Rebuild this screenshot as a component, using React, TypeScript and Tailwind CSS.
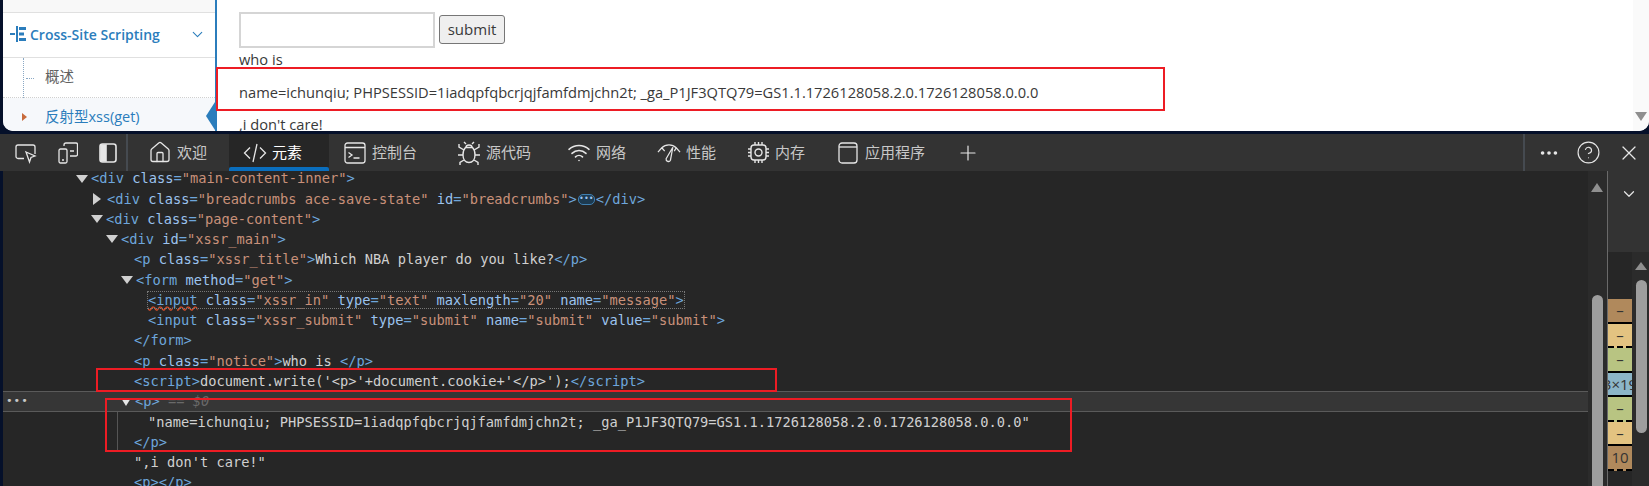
import React from 'react';
import { Home, Plus, X, ChevronDown, CircleHelp, Ellipsis, Wifi } from 'lucide-react';

const Tok = {
  t: (s: string) => <span className="text-[#6ea6dc]">{s}</span>,
  a: (s: string) => <span className="text-[#9cc3ee]">{s}</span>,
  v: (s: string) => <span className="text-[#c9917a]">{s}</span>,
};

const attr = (name: string, value: string) => (
  <>
    {' '}
    {Tok.a(name)}
    {Tok.t('=')}
    {Tok.v(`"${value}"`)}
  </>
);

const Row = ({ pad, tri, children }: { pad: string; tri?: 'down' | 'right'; children: React.ReactNode }) => (
  <div className={`flex h-[20.28px] shrink-0 items-center whitespace-pre ${pad}`}>
    {tri === 'down' && <span className="mr-[3px] h-0 w-0 border-x-[6px] border-t-[8px] border-x-transparent border-t-[#d0d0d0]" />}
    {tri === 'right' && <span className="mr-[6px] ml-[1px] h-0 w-0 border-y-[6px] border-l-[8px] border-y-transparent border-l-[#d0d0d0]" />}
    <span>{children}</span>
  </div>
);

function CodeIcon() {
  return (
    <svg width="24" height="22" viewBox="0 0 24 22" fill="none" stroke="currentColor" strokeWidth="1.3">
      <path d="M7 5.500 1.500 11 7 16.500M17 5.500 22.500 11 17 16.500M14 2 10 20" />
    </svg>
  );
}

function ConsoleIcon() {
  return (
    <svg width="22" height="22" viewBox="0 0 22 22" fill="none" stroke="currentColor" strokeWidth="1.3">
      <rect x="1" y="1" width="20" height="20" rx="2.500" />
      <path d="M1 5.500h20M4.500 10.500 8 13l-3.500 2.500M9.500 16h6" />
    </svg>
  );
}

function BugIcon() {
  return (
    <svg width="24" height="24" viewBox="0 0 24 24" fill="none" stroke="currentColor" strokeWidth="1.4">
      <path d="M8.500 6.500h7c2 2 2.500 4.500 2.500 7.500 0 4.500-2.500 7.500-6 7.500S6 18.500 6 14c0-3 .5-5.500 2.500-7.500Z" />
      <path d="M9 6.500C9 5 10 4 12 4s3 1 3 2.500M9 3 7 1M15 3l2-2M7 9 2 6V3M17 9l5-3V3M6 14H1M18 14h5M7 19l-4 2.500V24M17 19l4 2.500V24" />
    </svg>
  );
}

function GaugeIcon() {
  return (
    <svg width="25" height="22" viewBox="0 0 25 22" fill="none" stroke="currentColor" strokeWidth="1.3">
      <path d="M1 10 5 5.500C7 3.500 9.500 2.500 12.500 2.500S18 3.500 20 5.500L24 10M5 5.500 8 9M20 5.500 18 9" />
      <path d="M9.500 17 16.500 5 14 18.500a2.400 2.400 0 0 1-4.500-1.500Z" />
    </svg>
  );
}

function ChipIcon() {
  return (
    <svg width="23" height="23" viewBox="0 0 23 23" fill="none" stroke="currentColor" strokeWidth="1.4">
      <rect x="4" y="4" width="15" height="15" rx="3" />
      <circle cx="11.500" cy="11.500" r="3.500" />
      <path d="M8 1v3M11.500 1v3M15 1v3M8 19v3M11.500 19v3M15 19v3M1 8h3M1 11.500h3M1 15h3M19 8h3M19 11.500h3M19 15h3" />
    </svg>
  );
}

function AppIcon() {
  return (
    <svg width="20" height="22" viewBox="0 0 20 22" fill="none" stroke="currentColor" strokeWidth="1.3">
      <rect x="1" y="1" width="18" height="20" rx="3" />
      <path d="M1 5h18" />
    </svg>
  );
}

const tabs = [
  { label: '欢迎', icon: <Home size={25} strokeWidth={1.3} />, cls: 'ml-[20px] w-[81px]' },
  { label: '元素', icon: <CodeIcon />, cls: 'w-[100px] pl-[14px] bg-[#262626] text-white', active: true },
  { label: '控制台', icon: <ConsoleIcon />, cls: 'pl-[14px] w-[117px]' },
  { label: '源代码', icon: <BugIcon />, cls: 'pl-[11px] w-[121px]' },
  { label: '网络', icon: <Wifi size={25} strokeWidth={1.6} />, cls: 'w-[90px]' },
  { label: '性能', icon: <GaugeIcon />, cls: 'w-[89px]' },
  { label: '内存', icon: <ChipIcon />, cls: 'w-[90px]' },
  { label: '应用程序', icon: <AppIcon />, cls: 'w-[120px]' },
];

const boxRows = [
  { label: '–', cls: 'bg-[#b0895c] border-b-2 border-black' },
  { label: '–', cls: 'bg-[#e3c381] border-b-2 border-dashed border-black' },
  { label: '–', cls: 'bg-[#b8c482] border-b-2 border-black' },
  { label: '3×19', cls: 'bg-[#8cb6c8] border-b-2 border-black' },
  { label: '–', cls: 'bg-[#b8c482] border-b-2 border-dashed border-black' },
  { label: '–', cls: 'bg-[#e3c381] border-b-2 border-black' },
  { label: '10', cls: 'bg-[#b0895c] border-b-2 border-dashed border-black' },
];

export default function App() {
  return (
    <div className="flex h-[486px] w-[1649px] flex-col overflow-hidden bg-[#05102a] pl-[3px] font-['Open_Sans',sans-serif]">
      {/* page being inspected */}
      <div className="relative flex h-[131px] shrink-0 overflow-hidden rounded-b-[10px] bg-white text-[14.67px] text-[#393939]">
        <aside className="flex w-[214px] shrink-0 flex-col border-r-2 border-[#2b7dbc] text-[14px]">
          <div className="h-[13px] shrink-0 border-b border-[#e0e0e0] bg-[#f8f8f8]" />
          <div className="flex h-[45px] shrink-0 items-center border-b border-[#e0e0e0] pb-[2px] pl-[7px] text-[#2b7dbc]">
            <svg width="17" height="16" viewBox="0 0 17 16" fill="currentColor" className="shrink-0">
              <path d="M0 7h5v2H0zM6 0h2v16H6zM9 1h7v3H9zM9 6.500h5v3H9zM9 12h7v3H9z" />
            </svg>
            <span className="ml-[3px] font-semibold">Cross-Site Scripting</span>
            <ChevronDown size={17} strokeWidth={1.5} className="ml-[29px]" />
          </div>
          <div className="relative flex h-[40px] shrink-0 items-center border-b border-dotted border-[#d0d0d0] pb-[4px] pl-[42px] text-[14.5px] text-[#616161] font-['Noto_Sans_CJK_SC',sans-serif]">
            <span className="absolute top-0 left-[20px] h-[80px] border-l border-dotted border-[#8aa8c4]" />
            <span className="absolute top-[20px] left-[23px] w-[8px] border-t border-dotted border-[#8aa8c4]" />
            概述
          </div>
          <div className="relative flex flex-1 items-center bg-[#f6f8fb] pt-[4px] pl-[42px] text-[14.5px] text-[#2b7dbc] font-['Open_Sans','Noto_Sans_CJK_SC',sans-serif]">
            <span className="absolute top-[15px] left-[19px] h-0 w-0 border-y-[4px] border-l-[5px] border-y-transparent border-l-[#c86b3c]" />
            反射型xss(get)
            <span className="absolute top-[4px] right-0 h-0 w-0 border-y-[14px] border-r-[9px] border-y-transparent border-r-[#2b7dbc]" />
          </div>
        </aside>
        <main className="flex-1 pl-[22px]">
          <div className="flex h-[48px] items-start pt-[12px]">
            <div className="h-[36px] w-[196px] border-2 border-[#d5d5d5] bg-white" />
            <button className="mt-[3px] ml-[4px] h-[29px] w-[66px] rounded-[3px] border border-[#767676] bg-[#efefef] text-[15px] text-[#393939]">submit</button>
          </div>
          <p className="mt-[1px] leading-[20px]">who is</p>
          <p className="mt-[13px] leading-[20px]">name=ichunqiu; PHPSESSID=1iadqpfqbcrjqjfamfdmjchn2t; _ga_P1JF3QTQ79=GS1.1.1726128058.2.0.1726128058.0.0.0</p>
          <p className="mt-[12px] leading-[20px]">,i don't care!</p>
        </main>
        <div className="relative w-[16px] shrink-0 bg-[#fafafa]">
          <span className="absolute top-[112px] left-[2px] h-0 w-0 border-x-[6px] border-t-[9px] border-x-transparent border-t-[#8f8f8f]" />
        </div>
      </div>
      <div className="h-[3px] shrink-0" />

      {/* devtools toolbar */}
      <div className="-ml-[3px] flex h-[37px] shrink-0 items-center bg-[#333333] pl-[3px] text-[15px] text-[#c8c8c8] font-['Noto_Sans_CJK_SC',sans-serif]">
        <div className="flex h-full w-[125px] shrink-0 items-center gap-[21px] border-r-2 border-[#454a50] pl-[12px] text-[#e6e6e6]">
          <svg width="22" height="22" viewBox="0 0 22 22" fill="none" stroke="currentColor" strokeWidth="1.3">
            <path d="M9 16.500H3a2 2 0 0 1-2-2V5a2 2 0 0 1 2-2h15a2 2 0 0 1 2 2v7" />
            <path d="m11 10 9 4-4 1.500L14.500 20Z" />
          </svg>
          <svg width="20" height="22" viewBox="0 0 20 22" fill="none" stroke="currentColor" strokeWidth="1.3">
            <path d="M6 4V3a2 2 0 0 1 2-2h10a1.500 1.500 0 0 1 1.500 1.500v10a1.500 1.500 0 0 1-1.500 1.500h-6" />
            <rect x="1" y="7" width="8" height="14" rx="1.500" />
            <path d="M4 18h2M12 9h4" />
          </svg>
          <svg width="18" height="20" viewBox="0 0 18 20" fill="none" stroke="currentColor" strokeWidth="1.6">
            <rect x="1" y="1" width="16" height="18" rx="2.500" />
            <path d="M2 2h5v16H2z" fill="currentColor" />
          </svg>
        </div>
        {tabs.map((tab) => (
          <div key={tab.label} className={`relative flex h-full shrink-0 items-center gap-[6px] ${tab.cls}`}>
            <span className="flex w-[24px] shrink-0 justify-center text-[#e6e6e6]">{tab.icon}</span>
            <span className="-ml-[1px]">{tab.label}</span>
            {tab.active && <span className="absolute right-0 bottom-0 left-0 h-[4px] rounded-t-[2px] bg-[#0a6ebd]" />}
          </div>
        ))}
        <Plus size={24} strokeWidth={1.2} className="text-[#e6e6e6]" />
        <div className="ml-auto flex h-full w-[126px] shrink-0 items-center border-l-2 border-[#454a50] text-[#e6e6e6]">
          <Ellipsis size={22} strokeWidth={2} className="ml-[13px]" />
          <CircleHelp size={25} strokeWidth={1.1} className="ml-[16px]" />
          <X size={24} strokeWidth={1.2} className="ml-[16px]" />
        </div>
      </div>

      {/* elements tree + side pane */}
      <div className="flex min-h-0 flex-1 bg-[#262626]">
        <div className="relative min-w-0 flex-1 overflow-hidden">
          <div className="-mt-[2.5px] flex flex-col font-['DejaVu_Sans_Mono',monospace] text-[13.7px] text-[#d0d0d0]">
            <Row pad="pl-[73px]" tri="down">{Tok.t('<div')}{attr('class', 'main-content-inner')}{Tok.t('>')}</Row>
            <Row pad="pl-[89px]" tri="right">
              {Tok.t('<div')}{attr('class', 'breadcrumbs ace-save-state')}{attr('id', 'breadcrumbs')}{Tok.t('>')}
              <span className="mx-[1px] inline-block h-[11px] w-[17px] rounded-[5px] border border-[#3f7fb0] bg-[#1d3a50] align-middle text-center text-[8px] leading-[8px] text-[#9cc3ee]">•••</span>
              {Tok.t('</div>')}
            </Row>
            <Row pad="pl-[88px]" tri="down">{Tok.t('<div')}{attr('class', 'page-content')}{Tok.t('>')}</Row>
            <Row pad="pl-[103px]" tri="down">{Tok.t('<div')}{attr('id', 'xssr_main')}{Tok.t('>')}</Row>
            <Row pad="pl-[131px]">{Tok.t('<p')}{attr('class', 'xssr_title')}{Tok.t('>')}Which NBA player do you like?{Tok.t('</p>')}</Row>
            <Row pad="pl-[118px]" tri="down">{Tok.t('<form')}{attr('method', 'get')}{Tok.t('>')}</Row>
            <Row pad="pl-[145px]">
              <span className="outline-1 outline-dotted outline-[#777777]">
                <span className="underline decoration-wavy decoration-[#e0502a]">{Tok.t('<input')}</span>
                {attr('class', 'xssr_in')}{attr('type', 'text')}{attr('maxlength', '20')}{attr('name', 'message')}{Tok.t('>')}
              </span>
            </Row>
            <Row pad="pl-[145px]">{Tok.t('<input')}{attr('class', 'xssr_submit')}{attr('type', 'submit')}{attr('name', 'submit')}{attr('value', 'submit')}{Tok.t('>')}</Row>
            <Row pad="pl-[131px]">{Tok.t('</form>')}</Row>
            <Row pad="pl-[131px]">{Tok.t('<p')}{attr('class', 'notice')}{Tok.t('>')}who is {Tok.t('</p>')}</Row>
            <Row pad="pl-[131px]">{Tok.t('<script>')}document.write('&lt;p&gt;'+document.cookie+'&lt;/p&gt;');{Tok.t('</script>')}</Row>
            <div className="relative flex h-[20.28px] shrink-0 items-center whitespace-pre border-y border-[#5a5a5a] bg-[#363636] pl-[118px]">
              <span className="absolute left-[3px] text-[11px] tracking-[1px] text-[#c8c8c8]">•••</span>
              <span className="mr-[4px] h-0 w-0 border-x-[5px] border-t-[8px] border-x-transparent border-t-[#e6e6e6]" />
              {Tok.t('<p>')}<span className="text-[#6a6a6a]"> == <em>$0</em></span>
            </div>
            <Row pad="pl-[145px]">"name=ichunqiu; PHPSESSID=1iadqpfqbcrjqjfamfdmjchn2t; _ga_P1JF3QTQ79=GS1.1.1726128058.2.0.1726128058.0.0.0"</Row>
            <Row pad="pl-[131px]">{Tok.t('</p>')}</Row>
            <Row pad="pl-[131px]">",i don't care!"</Row>
            <Row pad="pl-[131px]">{Tok.t('<p></p>')}</Row>
          </div>
          <span className="absolute top-[241px] bottom-[34px] left-[114px] border-l border-[#555555]" />
        </div>

        {/* scrollbar of the tree */}
        <div className="relative w-[19px] shrink-0 bg-[#2b2b2b]">
          <span className="absolute top-[12px] left-[3px] h-0 w-0 border-x-[6px] border-b-[9px] border-x-transparent border-b-[#8f8f8f]" />
          <span className="absolute top-[124px] bottom-0 left-[4px] w-[11px] rounded-t-[6px] bg-[#9e9e9e]" />
        </div>

        {/* styles pane */}
        <div className="flex w-[42px] shrink-0 flex-col border-l border-[#6a6a6a]">
          <div className="flex h-[81px] shrink-0 justify-center bg-[#333333] pt-[14px] text-[#e6e6e6]">
            <ChevronDown size={18} strokeWidth={1.6} />
          </div>
          <div className="flex min-h-0 flex-1">
            <div className="w-[24px] shrink-0 bg-[#262626] pt-[47px] text-[15px] text-[#333333]">
              {boxRows.map((row, i) => (
                <div key={i} className={`flex h-[24.5px] items-center justify-center overflow-hidden whitespace-nowrap ${row.cls}`}>{row.label}</div>
              ))}
            </div>
            <div className="relative w-[17px] shrink-0 bg-[#2b2b2b]">
              <span className="absolute top-[10px] left-[3px] h-0 w-0 border-x-[6px] border-b-[8px] border-x-transparent border-b-[#8f8f8f]" />
              <span className="absolute top-[28px] left-[4px] h-[153px] w-[11px] rounded-[6px] bg-[#9e9e9e]" />
            </div>
          </div>
        </div>
      </div>

      {/* red annotation boxes drawn over the screenshot */}
      <div className="pointer-events-none absolute top-[67px] left-[216px] h-[44px] w-[949px] border-2 border-[#ed1c24]" />
      <div className="pointer-events-none absolute top-[368px] left-[96px] h-[24px] w-[681px] border-2 border-[#ed1c24]" />
      <div className="pointer-events-none absolute top-[398px] left-[105px] h-[54px] w-[967px] border-2 border-[#ed1c24]" />
    </div>
  );
}
